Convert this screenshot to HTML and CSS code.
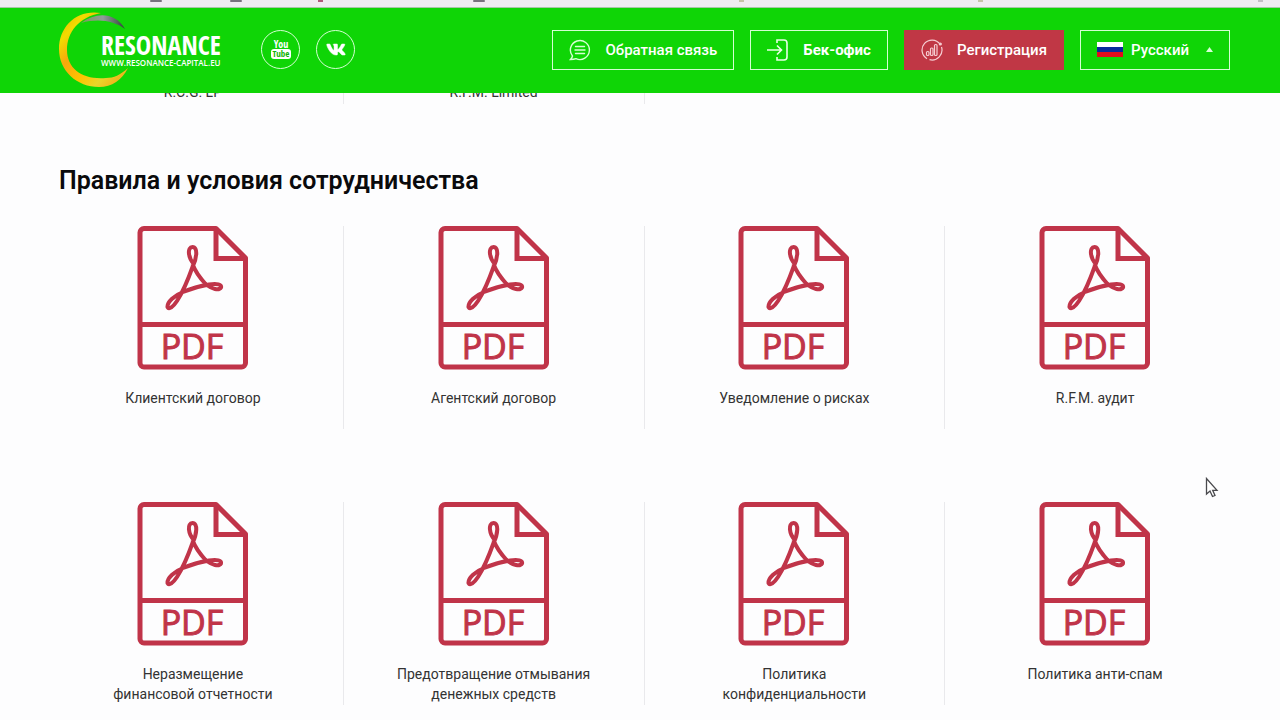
FILE: index.html
```html
<!DOCTYPE html>
<html lang="ru">
<head>
<meta charset="utf-8">
<meta name="viewport" content="width=device-width, initial-scale=1">
<title>Resonance Capital</title>
<link rel="stylesheet" href="styles.css">
</head>
<body>
<svg class="defs" aria-hidden="true">
  <symbol id="pdf" viewBox="0 0 112 144">
    <g fill="none" stroke="#c03449" stroke-width="5" stroke-linejoin="round">
      <path d="M7 2.500H79L108.500 32V137a4 4 0 0 1-4 4H7a4 4 0 0 1-4-4V6.500a4 4 0 0 1 4-4z"/>
      <path d="M3 98.500H108"/>
      <path stroke-linejoin="miter" d="M79 4V32.500H108"/>
      <path stroke-width="4" d="M57 38C51 32 50 21 55.500 21C61 21 60 32 55.500 41C52 51 47 64 40 75C36 81 32 84 30.500 81C30 76 38 69 46 66C53 63 63 60 72 58.500C80 57 85 58.500 84 61.500C82 65 75 63 69 58.500C63 52 58 45 55.500 38"/>
    </g>
    <text class="pdf-text" x="55" y="132.500" text-anchor="middle">PDF</text>
  </symbol>
</svg>

<svg class="strip" aria-hidden="true">
  <g fill="#77727d">
    <rect x="150" width="12" height="2" rx="1"/>
    <rect x="230" width="12" height="2" rx="1"/>
    <rect x="318" width="5" height="2" fill="#b05a78"/>
    <rect x="473" width="12" height="2" rx="1"/>
    <rect x="739" width="5" height="2" fill="#c5c4a8"/>
    <rect x="978" width="5" height="2" fill="#c5c4a8"/>
    <rect x="1258" width="5" height="2" fill="#c2bfc5"/>
  </g>
</svg>

<header class="header">
  <a class="logo" href="#" aria-label="Resonance Capital">
    <svg class="ring" viewBox="0 0 72 76" aria-hidden="true">
      <defs>
        <linearGradient id="gold" x1="0" y1="0" x2="1" y2="1">
          <stop offset="0" stop-color="#f5a500"/><stop offset=".2" stop-color="#f2dc00"/>
          <stop offset=".38" stop-color="#f7a80c"/><stop offset=".6" stop-color="#ffc400"/>
          <stop offset=".75" stop-color="#e9d62a"/><stop offset="1" stop-color="#f59a10"/>
        </linearGradient>
        <linearGradient id="steel"><stop offset="0" stop-color="#7a9b55"/><stop offset=".5" stop-color="#929c98"/><stop offset="1" stop-color="#30463a"/></linearGradient>
      </defs>
      <path fill="url(#gold)" d="M42 1C18-3 0 14 0 37C0 59 18 75 40 75C53 75 63 68 69 56C61 63 55 66 47 66C24 68 8 57 8 38C8 20 20 5 42 1z"/>
      <path fill="url(#steel)" d="M22 11C38-1 57 1 66 17C55 9 40 6 22 11z"/>
    </svg>
    <span class="wordmark">
      <span class="name">RESONANCE</span>
      <span class="site">WWW.RESONANCE-CAPITAL.EU</span>
    </span>
  </a>

  <nav class="social" aria-label="Социальные сети">
    <a class="round" href="#" aria-label="YouTube">
      <svg viewBox="0 -4 20 28" width="20" height="28" aria-hidden="true">
        <text class="you" x="10" y="8" text-anchor="middle">You</text>
        <rect x="0" y="9" width="20" height="10" rx="3" fill="#fff"/>
        <text class="tube" x="10" y="17" text-anchor="middle">Tube</text>
      </svg>
    </a>
    <a class="round" href="#" aria-label="ВКонтакте">
      <svg viewBox="2 6 20 13" width="20" height="13" fill="#fff" stroke="#fff" stroke-width=".5" aria-hidden="true"><path d="M20.800 7.740C20.930 7.320 20.800 7 20.180 7H18.160C17.640 7 17.410 7.270 17.280 7.570C17.280 7.570 16.250 10.080 14.790 11.720C14.310 12.190 14.100 12.340 13.840 12.340C13.710 12.340 13.500 12.190 13.500 11.760V7.740C13.500 7.230 13.380 7 12.950 7H9.760C9.440 7 9.250 7.240 9.250 7.470C9.250 7.950 10 8.070 10.050 9.440V12.420C10.050 13.080 9.930 13.200 9.680 13.200C9 13.200 7.320 10.670 6.330 7.790C6.130 7.230 5.940 7 5.420 7H3.390C2.820 7 2.700 7.270 2.700 7.570C2.700 8.110 3.390 10.770 5.900 14.290C7.570 16.700 9.930 18 12.080 18C13.370 18 13.530 17.710 13.530 17.210V15.390C13.530 14.820 13.650 14.700 14.060 14.700C14.360 14.700 14.870 14.850 16.070 16C17.450 17.380 17.670 18 18.450 18H20.470C21.050 18 21.340 17.710 21.180 17.140C21 16.570 20.340 15.740 19.470 14.760C19 14.210 18.290 13.600 18.070 13.300C17.770 12.920 17.860 12.750 18.070 12.400C18.070 12.400 20.540 8.930 20.800 7.740Z"/></svg>
    </a>
  </nav>

  <div class="actions">
    <button class="btn" type="button">
      <svg viewBox="0 0 22 22" width="22" height="22" fill="none" stroke="#d6ffd4" stroke-width="1.400" stroke-linecap="round" aria-hidden="true"><path d="M3.500 17A9.500 9.500 0 1 1 7 19.700C5 20.500 3 20.500 1.500 20.500C2.500 19.500 3.200 18.500 3.500 17z"/><path d="M6.500 7.500h9M6 11h10M6.500 14.500h9"/></svg>
      <span>Обратная связь</span>
    </button>
    <button class="btn btn-office" type="button">
      <svg viewBox="0 0 22 22" width="22" height="22" fill="none" stroke="#e9ffe8" stroke-width="1.600" aria-hidden="true"><path d="M10 4V1h7a3 3 0 0 1 3 3v14a3 3 0 0 1-3 3h-7v-3M0 11h14M10 6.500l4.500 4.500L10 15.500"/></svg>
      <span>Бек-офис</span>
    </button>
    <button class="btn btn-primary" type="button">
      <svg viewBox="0 0 22 22" width="22" height="22" fill="none" stroke="#f6cdd2" stroke-width="1.200" aria-hidden="true"><path d="M6 19.700A10 10 0 1 1 19 5M20.500 8A10 10 0 0 1 8.500 20.700"/><circle cx="19.300" cy="5" r="1" fill="#f6cdd2"/><rect x="5.500" y="12.500" width="2.500" height="4" rx="1"/><rect x="9.500" y="9" width="2.500" height="7.500" rx="1"/><rect x="13.500" y="5.500" width="2.500" height="11" rx="1"/></svg>
      <span>Регистрация</span>
    </button>
    <label class="language">
      <svg viewBox="0 0 26 15" width="26" height="15" aria-hidden="true"><path fill="#fff" d="M0 0h26v5H0z"/><path fill="#0b2a9b" d="M0 5h26v5H0z"/><path fill="#e30c1c" d="M0 10h26v5H0z"/></svg>
      <select aria-label="Язык"><option>Русский</option></select>
      <svg viewBox="0 0 7 5" width="7" height="5" aria-hidden="true"><path fill="#d8ffd6" d="M3.500 0L7 5H0z"/></svg>
    </label>
  </div>
</header>

<main class="main">
  <div class="grid previous">
    <a class="doc" href="#">R.C.G. LP</a>
    <a class="doc" href="#">R.F.M. Limited</a>
  </div>
  <h2 class="title">Правила и условия сотрудничества</h2>
  <div class="grid">
    <a class="doc" href="#"><svg class="pdf"><use href="#pdf"/></svg><span>Клиентский договор</span></a>
    <a class="doc" href="#"><svg class="pdf"><use href="#pdf"/></svg><span>Агентский договор</span></a>
    <a class="doc" href="#"><svg class="pdf"><use href="#pdf"/></svg><span>Уведомление о рисках</span></a>
    <a class="doc" href="#"><svg class="pdf"><use href="#pdf"/></svg><span>R.F.M. аудит</span></a>
    <a class="doc" href="#"><svg class="pdf"><use href="#pdf"/></svg><span>Неразмещение<br>финансовой отчетности</span></a>
    <a class="doc" href="#"><svg class="pdf"><use href="#pdf"/></svg><span>Предотвращение отмывания<br>денежных средств</span></a>
    <a class="doc" href="#"><svg class="pdf"><use href="#pdf"/></svg><span>Политика<br>конфиденциальности</span></a>
    <a class="doc" href="#"><svg class="pdf"><use href="#pdf"/></svg><span>Политика анти-спам</span></a>
  </div>
</main>
<svg class="cursor" viewBox="0 0 14 22" aria-hidden="true"><path fill="#fff" stroke="#4a4a4e" stroke-width="1.300" d="M1.500 1.500V17l3.500-3 2.500 5.500 2.500-1-2.300-5.200H12z"/></svg>
</body>
</html>
```
FILE: styles.css
```css
* { box-sizing: border-box; }

body {
  margin: 0;
  background: #fdfdfe;
  color: #333;
  font: 14px/20px Roboto, "Noto Sans", sans-serif;
}

a { color: inherit; text-decoration: none; }
svg { display: block; flex: none; }
.defs { position: absolute; width: 0; height: 0; }

.strip {
  width: 100%;
  height: 8px;
  background: #efecf1;
  border-bottom: 1px solid #a9c6a8;
}

.header {
  display: flex;
  align-items: center;
  height: 85px;
  padding: 0 50px 2px 59px;
  background: #0fd506;
  color: #fff;
}

.logo { display: flex; align-items: center; }
.ring { width: 72px; height: 76px; margin-right: -30px; }
.wordmark { display: flex; flex-direction: column; width: 120px; white-space: nowrap; }
.name { font: 700 26px/26px "Open Sans Condensed", "Roboto Condensed", "Liberation Sans Narrow", Roboto, sans-serif; }
.site { font: 600 8px/10px "Open Sans", sans-serif; }

.social { display: flex; gap: 16px; margin-left: 40px; }
.round {
  display: flex;
  align-items: center;
  justify-content: center;
  width: 39px;
  height: 39px;
  border: 1px solid #d4ffd2;
  border-radius: 50%;
}
.you { font: 700 10px "Open Sans Condensed", "Liberation Sans Narrow", sans-serif; fill: #fff; }
.tube { font: 700 9px "Open Sans Condensed", "Liberation Sans Narrow", sans-serif; fill: #0fb506; }

.actions { display: flex; gap: 16px; margin-left: auto; }
.btn, .language {
  display: flex;
  align-items: center;
  height: 40px;
  border: 1px solid #d4ffd2;
  background: transparent;
  color: #fff;
  font: 500 15px/20px Roboto, sans-serif;
}
.btn { gap: 14px; padding: 0 16px; white-space: nowrap; }
.btn-office { font-weight: 700; }
.btn-primary { border-color: #c03745; background: #c03745; }
.language { width: 150px; gap: 8px; padding: 0 16px; }
.language select {
  flex: 1;
  min-width: 0;
  padding: 0;
  border: 0;
  appearance: none;
  background: transparent;
  color: inherit;
  font: inherit;
}

.main { padding: 0 34px 0 43px; }
.grid { display: grid; grid-template-columns: repeat(4, 1fr); row-gap: 73px; }
.doc {
  display: flex;
  flex-direction: column;
  align-items: center;
  gap: 18px;
  min-height: 203px;
  border-right: 1px solid #e9e9ec;
  text-align: center;
}
.doc:nth-child(4n) { border-right-color: transparent; }
.previous { height: 11px; overflow: hidden; align-items: end; }
.previous .doc { height: 11px; min-height: 0; justify-content: flex-end; padding-bottom: 2px; }
.pdf { width: 112px; height: 144px; }
.pdf-text { font: 400 34px "Open Sans", sans-serif; fill: #c03449; stroke: #c03449; stroke-width: 1px; }

.title {
  margin: 61px 0 30px 16px;
  color: #0a0a0c;
  font: 600 25px/31px Roboto, sans-serif;
}

.cursor { position: absolute; left: 1205px; top: 477px; width: 14px; height: 22px; }
```
